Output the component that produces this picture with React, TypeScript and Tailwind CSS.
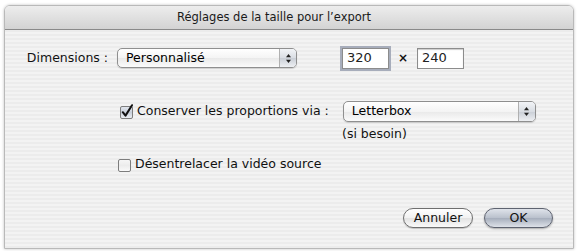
import React from "react";

const font = { fontFamily: '"DejaVu Sans", "Liberation Sans", sans-serif' };

function Arrows() {
  return (
    <svg width="7" height="11" viewBox="0 0 7 11">
      <path d="M3.5 1 L6 4.2 L1 4.2 Z" fill="#222" />
      <path d="M3.5 10 L6 6.8 L1 6.8 Z" fill="#222" />
    </svg>
  );
}

function Popup({ label, w, h }: { label: string; w: string; h: string }) {
  return (
    <div
      className={`${w} ${h} flex items-stretch rounded-[5px] border border-[#8f8f8f] bg-[linear-gradient(#ffffff,#f4f4f4_50%,#e9e9e9_51%,#fbfbfb)] shadow-[0_1px_1px_rgba(0,0,0,0.15)] overflow-hidden`}
    >
      <div className="flex-1 flex items-center pl-[8px] text-[12.5px] text-black">{label}</div>
      <div className="w-[17px] flex items-center justify-center border-l border-[#b0b0b0] bg-[linear-gradient(#f2f4f7,#d9dde3_50%,#c9ced6_51%,#eef0f3)]">
        <Arrows />
      </div>
    </div>
  );
}

function Checkbox({ checked }: { checked?: boolean }) {
  return (
    <svg width="15" height="15" viewBox="0 0 15 15" className="shrink-0">
      <defs>
        <linearGradient id={checked ? "cbg1" : "cbg2"} x1="0" y1="0" x2="0" y2="1">
          <stop offset="0" stopColor={checked ? "#e3e7ee" : "#f7f7f7"} />
          <stop offset="0.5" stopColor={checked ? "#c8cfda" : "#ececec"} />
          <stop offset="1" stopColor={checked ? "#eef1f5" : "#fbfbfb"} />
        </linearGradient>
      </defs>
      <rect x="1.5" y="2.5" width="12" height="12" rx="1.5" fill={`url(#${checked ? "cbg1" : "cbg2"})`} stroke="#7d7d7d" />
      {checked && (
        <path d="M3.8 8.2 L6.5 11.6 L13 1.2" fill="none" stroke="#111" strokeWidth="2" strokeLinecap="round" strokeLinejoin="round" />
      )}
    </svg>
  );
}

function Field({ value, focus }: { value: string; focus?: boolean }) {
  return (
    <div
      className={`w-[47px] h-[21px] flex items-center pl-[4px] bg-white border border-[#8c8c8c] text-[13px] text-[#222] ${
        focus ? "shadow-[0_0_0_2px_#a7adbb]" : "shadow-[inset_0_1px_1px_rgba(0,0,0,0.2)]"
      }`}
    >
      {value}
    </div>
  );
}

export default function App() {
  return (
    <div className="w-[579px] h-[251px] bg-white pt-[5px] pl-[4px]" style={font}>
      <div className="w-[570px] h-[244px] flex flex-col rounded-t-[6px] border border-[#b9b9b9] overflow-hidden shadow-[0_0_3px_rgba(0,0,0,0.25)]">
        <div className="h-[24px] shrink-0 flex items-center justify-center pr-[30px] border-b border-[#8a8a8a] bg-[linear-gradient(#ededed,#d3d3d3)] text-[11.5px] text-[#1a1a1a]">
          Réglages de la taille pour l’export
        </div>
        <div className="flex-1 flex flex-col bg-[repeating-linear-gradient(#ececec_0px,#ececec_2px,#f3f3f3_2px,#f3f3f3_4px)] text-[12.5px] text-[#111]">
          <div className="flex items-center mt-[17px] h-[22px]">
            <div className="w-[103px] text-right">Dimensions :</div>
            <div className="ml-[9px]">
              <Popup label="Personnalisé" w="w-[180px]" h="h-[20px]" />
            </div>
            <div className="ml-[45px]">
              <Field value="320" focus />
            </div>
            <div className="w-[28px] text-center font-bold text-[12px]">×</div>
            <Field value="240" />
          </div>
          <div className="flex items-center mt-[31px] h-[22px]">
            <div className="ml-[114px] flex items-center gap-[3px]">
              <Checkbox checked />
              <span>Conserver les proportions via :</span>
            </div>
            <div className="ml-[14px]">
              <Popup label="Letterbox" w="w-[193px]" h="h-[21px]" />
            </div>
          </div>
          <div className="ml-[337px] mt-[3px] h-[19px] flex items-center">(si besoin)</div>
          <div className="flex items-center mt-[13px] h-[15px] ml-[112px] gap-[3px]">
            <Checkbox />
            <span>Désentrelacer la vidéo source</span>
          </div>
          <div className="flex justify-end items-center mt-[36px] pr-[20px] gap-[11px]">
            <div className="w-[70px] h-[20px] rounded-full border border-[#6f6f6f] bg-[linear-gradient(#ffffff,#f1f1f1_50%,#e2e2e2_51%,#fafafa)] flex items-center justify-center text-[12.5px] shadow-[0_1px_1px_rgba(0,0,0,0.2)]">
              Annuler
            </div>
            <div className="w-[69px] h-[20px] rounded-full border border-[#5e6370] bg-[linear-gradient(#dfe3ea,#b9c0cc_50%,#a6aebc_51%,#dde1e8)] flex items-center justify-center text-[12.5px] shadow-[0_1px_2px_rgba(0,0,0,0.3)]">
              OK
            </div>
          </div>
        </div>
      </div>
    </div>
  );
}
